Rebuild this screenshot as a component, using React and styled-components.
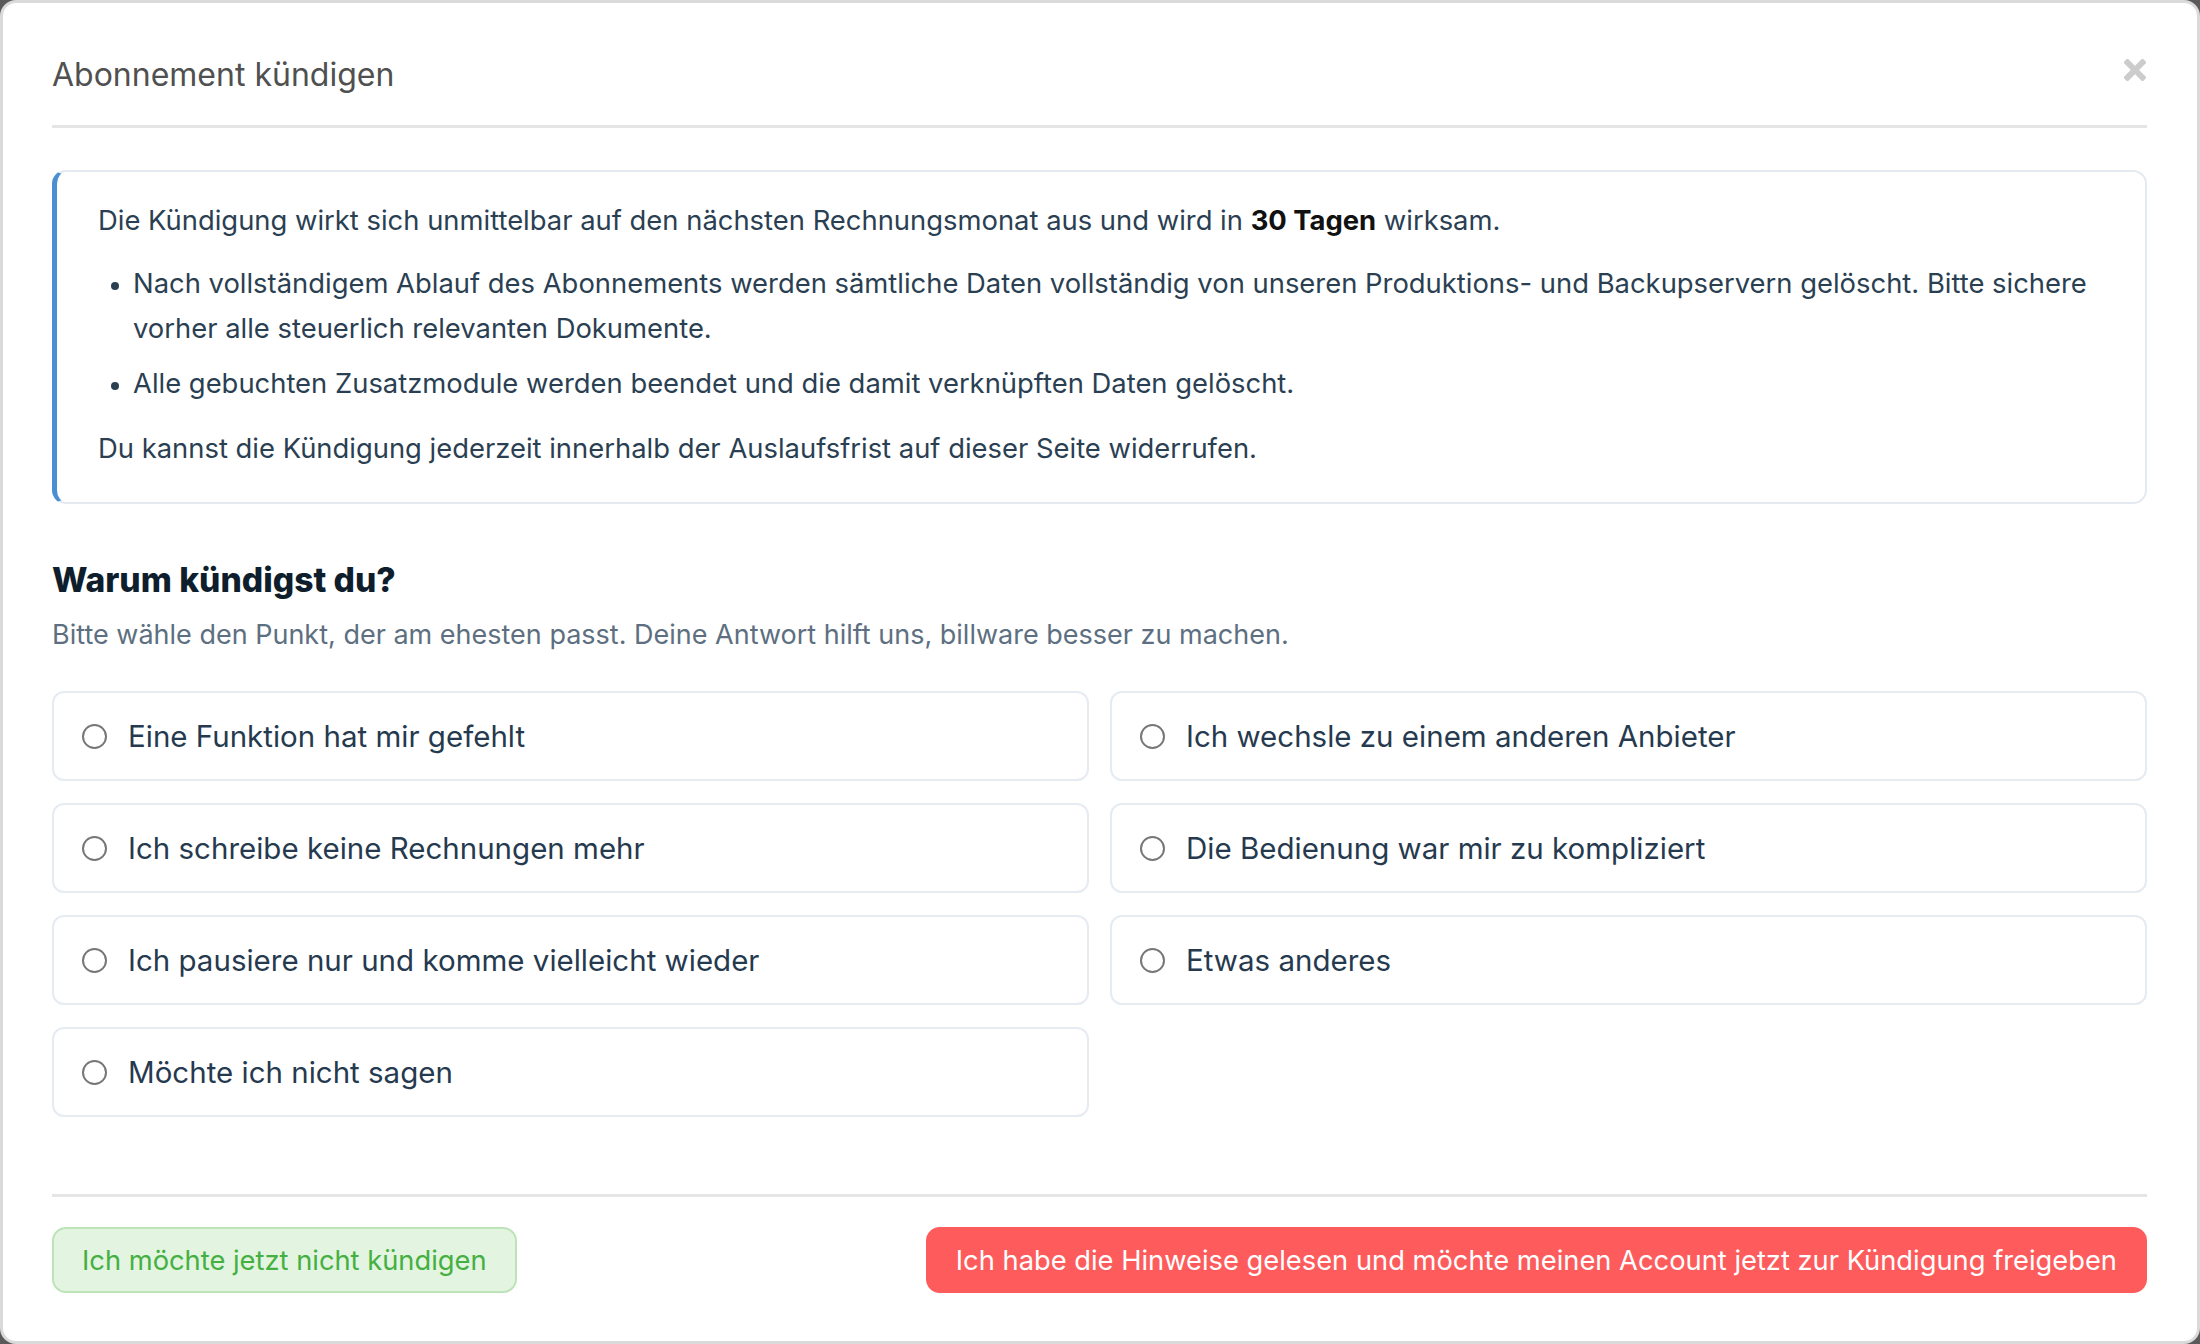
import React from 'react';
import styled, { createGlobalStyle } from 'styled-components';

const GlobalStyle = createGlobalStyle`
  html, body {
    margin: 0;
    padding: 0;
    background: #5a5a5a;
  }
  body {
    font-family: Inter, "Liberation Sans", sans-serif;
  }
`;

const Modal = styled.div`
  box-sizing: border-box;
  width: 2200px;
  height: 1344px;
  background: #fff;
  border: 3px solid #dadada;
  border-radius: 16px;
  padding: 0 50px 0 49px;
  display: flex;
  flex-direction: column;
`;

const Header = styled.div`
  box-sizing: border-box;
  height: 125px;
  padding-top: 20px;
  display: flex;
  align-items: center;
  justify-content: space-between;
  border-bottom: 3px solid #e5e5e5;
`;

const Title = styled.h1`
  margin: 0;
  font-size: 32px;
  font-weight: 400;
  color: #505050;
`;

const Close = styled.button`
  border: none;
  background: none;
  padding: 0;
  margin: 0 1px 8px 0;
  cursor: pointer;
  display: flex;
`;

const InfoBox = styled.div`
  margin-top: 42px;
  border: 2px solid #e5eaf0;
  border-left: 5px solid #4a8fd2;
  border-radius: 14px;
  padding: 26px 40px 31px 41px;
  color: #2b3f53;
  font-size: 27.4px;
  line-height: 45px;
`;

const Para = styled.p`
  margin: 0;
  b {
    color: #111;
    font-weight: 700;
  }
`;

const List = styled.ul`
  margin: 18px 0 20px;
  padding-left: 35px;
  li + li {
    margin-top: 10px;
  }
  li::marker {
    font-size: 24px;
  }
`;

const Heading = styled.h2`
  margin: 56px 0 0;
  font-size: 33.6px;
  line-height: 40px;
  font-weight: 800;
  color: #0e1e2c;
`;

const Sub = styled.p`
  margin: 17px 0 0;
  font-size: 27px;
  line-height: 36px;
  color: #5d6f80;
`;

const Options = styled.div`
  margin-top: 38px;
  display: grid;
  grid-template-columns: 1fr 1fr;
  column-gap: 21px;
  row-gap: 22px;
`;

const Option = styled.label`
  box-sizing: border-box;
  height: 90px;
  display: flex;
  align-items: center;
  gap: 21px;
  padding-left: 28px;
  border: 2px solid #e5ebf0;
  border-radius: 12px;
  font-size: 29.5px;
  color: #263a4f;
  cursor: pointer;
`;

const Radio = styled.span`
  box-sizing: border-box;
  width: 25px;
  height: 25px;
  border-radius: 50%;
  border: 2px solid #777;
  flex-shrink: 0;
`;

const Footer = styled.div`
  margin-top: 77px;
  border-top: 3px solid #e5e5e5;
  padding-top: 30px;
  display: flex;
  justify-content: space-between;
`;

const Button = styled.button`
  box-sizing: border-box;
  height: 66px;
  padding: 0 28px;
  border-radius: 14px;
  font-family: inherit;
  font-size: 27.3px;
  cursor: pointer;
  border: 2px solid ${(p) => (p.$danger ? '#fe5c5c' : '#bde3b8')};
  background: ${(p) => (p.$danger ? '#fe5c5c' : '#e3f4e0')};
  color: ${(p) => (p.$danger ? '#fff' : '#45b042')};
`;

const reasons = [
  'Eine Funktion hat mir gefehlt',
  'Ich wechsle zu einem anderen Anbieter',
  'Ich schreibe keine Rechnungen mehr',
  'Die Bedienung war mir zu kompliziert',
  'Ich pausiere nur und komme vielleicht wieder',
  'Etwas anderes',
  'Möchte ich nicht sagen',
];

const App = () => (
  <>
    <GlobalStyle />
    <Modal>
      <Header>
        <Title>Abonnement kündigen</Title>
        <Close aria-label="Schließen">
          <svg width="22" height="22" viewBox="0 0 22 22">
            <path d="M3.5 3.5 L18.5 18.5 M18.5 3.5 L3.5 18.5" stroke="#cccccc" strokeWidth="6" strokeLinecap="square" />
          </svg>
        </Close>
      </Header>
      <InfoBox>
        <Para>
          Die Kündigung wirkt sich unmittelbar auf den nächsten Rechnungsmonat aus und wird in <b>30 Tagen</b> wirksam.
        </Para>
        <List>
          <li>
            Nach vollständigem Ablauf des Abonnements werden sämtliche Daten vollständig von unseren Produktions- und
            Backupservern gelöscht. Bitte sichere vorher alle steuerlich relevanten Dokumente.
          </li>
          <li>Alle gebuchten Zusatzmodule werden beendet und die damit verknüpften Daten gelöscht.</li>
        </List>
        <Para>Du kannst die Kündigung jederzeit innerhalb der Auslaufsfrist auf dieser Seite widerrufen.</Para>
      </InfoBox>
      <Heading>Warum kündigst du?</Heading>
      <Sub>Bitte wähle den Punkt, der am ehesten passt. Deine Antwort hilft uns, billware besser zu machen.</Sub>
      <Options>
        {reasons.map((r) => (
          <Option key={r}>
            <Radio />
            {r}
          </Option>
        ))}
      </Options>
      <Footer>
        <Button>Ich möchte jetzt nicht kündigen</Button>
        <Button $danger>Ich habe die Hinweise gelesen und möchte meinen Account jetzt zur Kündigung freigeben</Button>
      </Footer>
    </Modal>
  </>
);

export default App;
